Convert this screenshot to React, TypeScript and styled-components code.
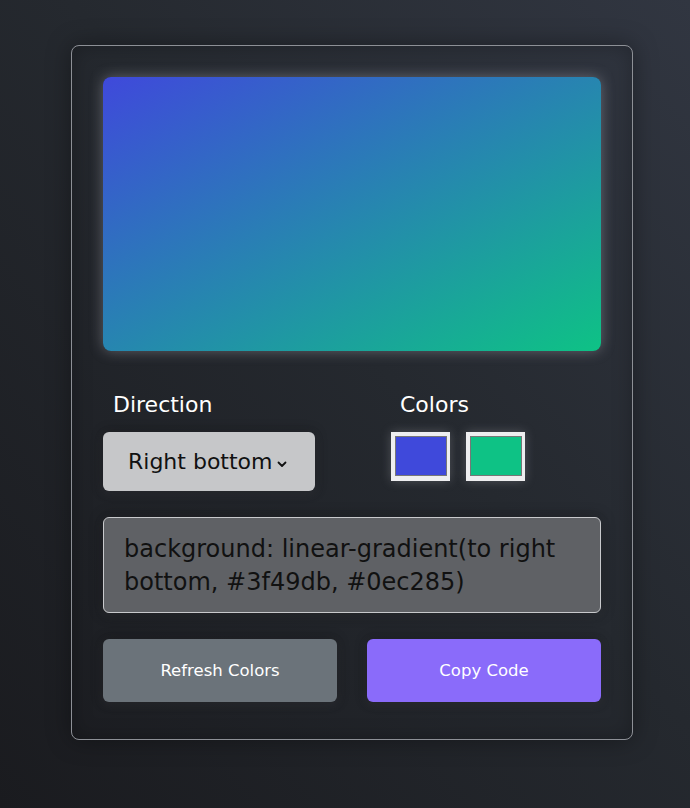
import React from "react";
import styled, { createGlobalStyle } from "styled-components";

const Global = createGlobalStyle`
  html, body { margin: 0; padding: 0; }
  body {
    min-height: 808px;
    background: linear-gradient(to bottom left, #313641 0%, #25292f 45%, #1a1b1f 100%);
    font-family: "DejaVu Sans", "Open Sans", sans-serif;
  }
  #root { min-height: 808px; }
`;

const Page = styled.main`
  display: flex;
  padding-top: 45px;
  padding-left: 71px;
`;

const Card = styled.section`
  width: 562px;
  box-sizing: border-box;
  padding: 31px 31px 37px;
  border: 1px solid #8d9096;
  border-radius: 8px;
  box-shadow: 0 0 24px rgba(0, 0, 0, 0.35), inset 0 0 20px rgba(0, 0, 0, 0.25);
  display: flex;
  flex-direction: column;
`;

const Preview = styled.div`
  height: 274px;
  border-radius: 8px;
  background: linear-gradient(to right bottom, #3f49db, #0ec285);
  box-shadow: 0 0 14px rgba(210, 210, 220, 0.35);
`;

const Options = styled.div`
  display: flex;
  margin-top: 40px;
`;

const Group = styled.div<{ $width: number }>`
  width: ${(p) => p.$width}px;
  display: flex;
  flex-direction: column;
`;

const Label = styled.div<{ $indent: number }>`
  color: #ffffff;
  font-size: 22px;
  line-height: 28px;
  padding-left: ${(p) => p.$indent}px;
  margin-bottom: 13px;
`;

const Select = styled.div`
  width: 212px;
  height: 59px;
  box-sizing: border-box;
  background: #c6c7c9;
  border-radius: 6px;
  display: flex;
  align-items: center;
  padding-left: 25px;
  gap: 3px;
  color: #111;
  font-size: 22px;
  box-shadow: 0 0 12px rgba(0, 0, 0, 0.45), 0 2px 10px rgba(140, 140, 150, 0.2);
`;

const Swatches = styled.div`
  display: flex;
  gap: 16px;
`;

const Swatch = styled.div<{ $color: string }>`
  width: 59px;
  height: 49px;
  box-sizing: border-box;
  background: #eeeef0;
  padding: 4px 3px 5px 4px;
  box-shadow: 0 0 10px rgba(210, 210, 220, 0.25);
  &::after {
    content: "";
    display: block;
    width: 100%;
    height: 100%;
    box-sizing: border-box;
    border: 1px solid #777;
    background: ${(p) => p.$color};
  }
`;

const Code = styled.div`
  margin-top: 26px;
  height: 96px;
  box-sizing: border-box;
  border: 1px solid #c8c9cc;
  border-radius: 6px;
  background: #5f6165;
  padding: 15px 20px;
  color: #111;
  font-size: 24px;
  line-height: 33px;
  box-shadow: 0 0 14px rgba(0, 0, 0, 0.4), 0 2px 10px rgba(140, 140, 150, 0.15);
`;

const Buttons = styled.div`
  display: grid;
  grid-template-columns: 1fr 1fr;
  gap: 30px;
  margin-top: 26px;
`;

const Button = styled.button<{ $bg: string }>`
  height: 63px;
  border: none;
  border-radius: 6px;
  background: ${(p) => p.$bg};
  color: #fff;
  font-family: inherit;
  font-size: 16.5px;
  box-shadow: 0 0 12px rgba(0, 0, 0, 0.45), 0 2px 10px rgba(140, 140, 150, 0.2);
`;

const Chevron = () => (
  <svg width="12" height="12" viewBox="0 0 12 12" style={{ marginTop: 4 }}>
    <path d="M2.5 4.5 L6 8 L9.5 4.5" fill="none" stroke="#111" strokeWidth="1.8" strokeLinecap="round" strokeLinejoin="round" />
  </svg>
);

export default function App() {
  return (
    <>
      <Global />
      <Page>
        <Card>
          <Preview />
          <Options>
            <Group $width={288}>
              <Label $indent={10}>Direction</Label>
              <Select>
                Right bottom
                <Chevron />
              </Select>
            </Group>
            <Group $width={200}>
              <Label $indent={9}>Colors</Label>
              <Swatches>
                <Swatch $color="#3f49db" />
                <Swatch $color="#0ec285" />
              </Swatches>
            </Group>
          </Options>
          <Code>background: linear-gradient(to right bottom, #3f49db, #0ec285)</Code>
          <Buttons>
            <Button $bg="#6b737a">Refresh Colors</Button>
            <Button $bg="#8a6bfa">Copy Code</Button>
          </Buttons>
        </Card>
      </Page>
    </>
  );
}
